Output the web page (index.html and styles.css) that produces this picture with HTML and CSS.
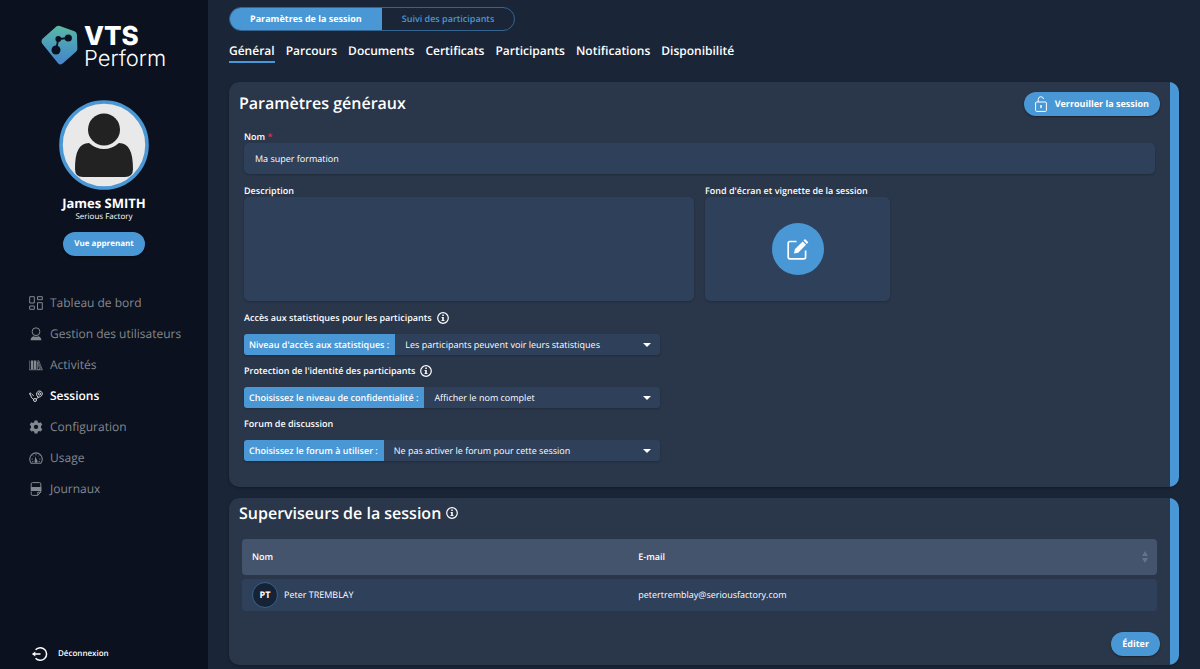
FILE: index.html
```
<!DOCTYPE html>
<html lang="fr">
<head>
<meta charset="utf-8">
<meta name="viewport" content="width=device-width, initial-scale=1">
<title>VTS Perform – Paramètres de la session</title>
<link rel="stylesheet" href="styles.css">
</head>
<body>
<svg class="sprite" aria-hidden="true">
  <symbol id="info" viewBox="0 0 12 12">
    <circle cx="6" cy="6" r="5.3" fill="none" stroke="#fff" stroke-width="1.2"/>
    <path d="M5.3 2.6h1.5v1.3H5.3zM4.6 5h2.2v3.2h.8v.9H4.4v-.9h.8V5.9h-.6z" fill="#fff"/>
  </symbol>
</svg>
<div class="app">
  <aside class="sidebar">
    <div class="brand">
      <svg class="brand-mark" viewBox="0 0 37 40" aria-hidden="true">
        <defs><linearGradient id="g" x1="0" y1="0" x2="0" y2="1"><stop offset="0" stop-color="#5bb8a4"/><stop offset=".5" stop-color="#4b9dba"/><stop offset="1" stop-color="#4685cc"/></linearGradient></defs>
        <path d="M15.600 1.300Q17.500 .3 19.500 1.200L33.500 6.300Q35.700 7.200 35.900 9.500L36.400 23.500Q36.300 25.300 35.200 26.500L22 38.300Q19.300 40.600 17 38.200L1.300 18.700Q-.2 16.500 1.300 14Z" fill="url(#g)"/>
        <path d="M15 25L17.300 14L27 13" fill="none" stroke="#0b111e" stroke-width="1.800"/>
        <circle cx="15" cy="25" r="4.500" fill="#0b111e"/><circle cx="17.300" cy="14" r="2.900" fill="#0b111e"/><circle cx="27.300" cy="13" r="3.600" fill="#0b111e"/>
      </svg>
      <div class="brand-name"><strong>VTS</strong><span>Perform</span></div>
    </div>
    <div class="profile">
      <svg class="avatar" viewBox="0 0 90 90" role="img" aria-label="Avatar">
        <circle cx="45" cy="45" r="43" fill="#e9e9e9" stroke="#4a97d5" stroke-width="3.600"/>
        <circle cx="45" cy="29.500" r="16" fill="#222"/>
        <path d="M30 43Q37 49 45 49Q53 49 60 43C70 43 74 52 74 69Q74 77 66 77H24Q16 77 16 69C16 52 20 43 30 43Z" fill="#222"/>
      </svg>
      <strong class="user-name">James SMITH</strong>
      <span class="company">Serious Factory</span>
      <button class="btn btn-small" type="button">Vue apprenant</button>
    </div>
    <nav class="menu" aria-label="Menu principal">
      <a href="#"><svg viewBox="0 0 14 14"><g fill="none" stroke="currentColor"><path d="M.7.7h4.600v6.300H.7zM8.500.7h4.800v3H8.500zM.7 10h4.600v3.300H.7zM8.500 6.700h4.800v6.600H8.500z"/></g></svg>Tableau de bord</a>
      <a href="#"><svg viewBox="0 0 14 14"><circle cx="7" cy="4.700" r="3.900" fill="none" stroke="currentColor"/><path d="M1.500 13.300Q2 9.600 4.600 9.200Q7 10.400 9.400 9.200Q12 9.600 12.500 13.300Z" fill="currentColor"/></svg>Gestion des utilisateurs</a>
      <a href="#"><svg viewBox="0 0 14 14"><path d="M.7 2.500v9.300M.2 11.800h13.600M8.700 2.800l3.500 8.500h1L9.800 2.600zM8.500 4v7.500h2.300z" fill="none" stroke="currentColor" stroke-width=".7"/><path d="M2 2.500h2.300v9H2zM4.900 2.500h2.500v9H4.900z" fill="currentColor"/></svg>Activités</a>
      <a class="active" href="#"><svg viewBox="0 0 14 14"><g fill="none" stroke="currentColor" stroke-width=".8"><circle cx="1.300" cy="4.800" r=".8"/><circle cx="6" cy="11" r="1.500"/><path d="M1.500 5.800Q2 9.300 4.600 10.300M3 5.300L4.700 6.800M7.200 10.100L9.300 8.300M9 8.400Q6.700 5.600 7.800 3.600Q9.500 1.100 12 2.300Q14.200 3.900 13 6.200Q11.800 8.100 9 8.400Z"/><circle cx="10.400" cy="4.900" r="1.200"/></g></svg>Sessions</a>
      <a href="#"><svg viewBox="0 0 14 14"><path fill-rule="evenodd" d="M5.600.5h2.800l.4 1.800 1.200.6 1.800-.6 1.500 2.400-1.300 1.400v1.700l1.300 1.400-1.500 2.400-1.800-.5-1.200.7-.4 1.700H5.600l-.4-1.700-1.200-.7-1.800.5L.7 9.200 2 7.800V6.100L.7 4.700l1.500-2.400 1.800.6 1.200-.6zM7 4.800a2.100 2.100 0 1 0 0 4.300 2.100 2.100 0 0 0 0-4.300z" fill="currentColor"/></svg>Configuration</a>
      <a href="#"><svg viewBox="0 0 14 14"><path d="M2.200 12.300A6.300 6.300 0 1 1 11.800 12.300Z" fill="none" stroke="currentColor" stroke-width="1.100"/><path d="M7 3v1.500M3.800 4.500l.9.900M10.200 4.500l-.9.900M2.500 8H4M10 8h1.500M3 10.500h1.400M9.600 10.500H11" stroke="currentColor" stroke-width=".8"/><path d="M6.200 5.500L8.400 9.700A1.500 1.500 0 1 1 5.700 9.700Z" fill="currentColor"/></svg>Usage</a>
      <a href="#"><svg viewBox="0 0 14 14"><path d="M2.200 5V1.900Q2.200.6 3.500.6h7Q11.800.6 11.800 1.900V10L8.800 13.400H3.500Q2.200 13.400 2.200 12.100V9.500M8.800 13.300V10.200h3" fill="none" stroke="currentColor"/><path d="M1.700 5h10.600v4H1.700z" fill="currentColor"/></svg>Journaux</a>
    </nav>
    <a class="logout" href="#"><svg viewBox="0 0 16 16"><g fill="none" stroke="#fff" stroke-width="1.500"><path d="M3.600 3.800A6.300 6.300 0 1 1 3.600 12.200"/><path d="M.8 8h7.700"/></g><path d="M0 8l3.300-2.400v4.800z" fill="#fff"/></svg>Déconnexion</a>
  </aside>

  <main class="content">
    <div class="switch">
      <button class="switch-item selected" type="button">Paramètres de la session</button>
      <button class="switch-item" type="button">Suivi des participants</button>
    </div>
    <nav class="tabs" aria-label="Sections">
      <a class="current" href="#">Général</a><a href="#">Parcours</a><a href="#">Documents</a><a href="#">Certificats</a><a href="#">Participants</a><a href="#">Notifications</a><a href="#">Disponibilité</a>
    </nav>

    <section class="card">
      <div class="card-body">
        <header class="card-head">
          <h1>Paramètres généraux</h1>
          <button class="btn btn-lock" type="button"><svg viewBox="0 0 12 16" aria-hidden="true"><g fill="none" stroke="#fff"><rect x=".6" y="6" width="10.800" height="9.400" rx="1"/><path d="M3.200 6V3.300Q3.400.8 5.800.7Q8.200.8 8.600 3"/></g><path d="M5 9.300h2l-.5 3h-1z" fill="#fff"/></svg>Verrouiller la session</button>
        </header>
        <form class="form">
          <div class="field">
            <label for="name">Nom <span class="required">*</span></label>
            <input id="name" class="box" type="text" value="Ma super formation">
          </div>
          <div class="row">
            <div class="field">
              <label for="desc">Description</label>
              <textarea id="desc" class="box"></textarea>
            </div>
            <div class="field">
              <span class="label">Fond d'écran et vignette de la session</span>
              <div class="box thumb">
                <button class="round" type="button" aria-label="Modifier l'image"><svg viewBox="0 0 24 24" aria-hidden="true"><path d="M10.500 4.500H4Q2.200 4.500 2.200 6.300V20Q2.200 21.800 4 21.800H17.800Q19.600 21.800 19.600 20V13.500" fill="none" stroke="#fff" stroke-width="1.700"/><path d="M8 16.500L8.800 12.200L16.700 4.400L20 7.700L12.200 15.700ZM17.500 3.600L19 2.100L22.300 5.300L20.800 6.900Z" fill="#fff"/></svg></button>
              </div>
            </div>
          </div>
          <div class="options">
            <div class="option">
              <div class="option-title">Accès aux statistiques pour les participants <svg class="info"><use href="#info"/></svg></div>
              <div class="combo"><label for="stats">Niveau d'accès aux statistiques :</label><div class="picker"><select id="stats"><option>Les participants peuvent voir leurs statistiques</option></select></div></div>
            </div>
            <div class="option">
              <div class="option-title">Protection de l'identité des participants <svg class="info"><use href="#info"/></svg></div>
              <div class="combo"><label for="privacy">Choisissez le niveau de confidentialité :</label><div class="picker"><select id="privacy"><option>Afficher le nom complet</option></select></div></div>
            </div>
            <div class="option">
              <div class="option-title">Forum de discussion</div>
              <div class="combo"><label for="forum">Choisissez le forum à utiliser :</label><div class="picker"><select id="forum"><option>Ne pas activer le forum pour cette session</option></select></div></div>
            </div>
          </div>
        </form>
      </div>
    </section>

    <section class="card">
      <div class="card-body compact">
        <header class="card-head">
          <h2>Superviseurs de la session <svg class="info"><use href="#info"/></svg></h2>
        </header>
        <div class="table-wrap">
          <table class="people">
            <thead><tr><th scope="col">Nom</th><th scope="col"><div class="sortable">E-mail<svg class="sort" viewBox="0 0 6 12" aria-hidden="true"><path d="M3 0l3 5H0zM3 12l3-5H0z" fill="#65728a"/></svg></div></th></tr></thead>
            <tbody><tr><td><div class="person"><span class="initials">PT</span>Peter TREMBLAY</div></td><td>petertremblay@seriousfactory.com</td></tr></tbody>
          </table>
        </div>
        <footer class="card-foot"><button class="btn" type="button">Éditer</button></footer>
      </div>
    </section>
  </main>
</div>
</body>
</html>
```
FILE: styles.css
```
* { box-sizing: border-box; }
body { margin: 0; background: #1a2638; color: #fff; font: 9px/14px "Open Sans", "Noto Sans", sans-serif; text-rendering: geometricPrecision; }
a { color: inherit; text-decoration: none; }
button, input, select, textarea { font: inherit; color: inherit; border: 0; margin: 0; text-rendering: inherit; }
button { cursor: pointer; }
h1, h2 { margin: 0; font-size: 16px; line-height: 22px; font-weight: 600; }
.sprite { position: absolute; width: 0; height: 0; }

.app { display: grid; grid-template-columns: 208px minmax(0, 1fr); min-height: 100vh; }
.sidebar { display: flex; flex-direction: column; background: #0b111e; padding: 25px 0 7px; }
.brand { display: flex; gap: 6px; padding-left: 41px; }
.brand-mark { width: 37px; height: 40px; }
.brand-name { display: flex; flex-direction: column; font-family: Inter, sans-serif; }
.brand-name strong { font-size: 26px; line-height: 24px; font-weight: 800; }
.brand-name span { font-size: 22px; line-height: 20px; font-weight: 300; }

.profile { display: flex; flex-direction: column; align-items: center; margin-top: 31px; }
.avatar { width: 90px; height: 90px; }
.user-name { font-size: 13px; line-height: 18px; margin-top: 4px; }
.company { font-size: 8px; line-height: 10px; }
.btn { display: inline-flex; align-items: center; justify-content: center; gap: 8px; height: 24px; padding: 0 11px; border-radius: 12px; background: #4a97d5; font-weight: 700; box-shadow: 0 1px 2px #0006; }
.btn-small { font-size: 8px; margin-top: 10px; }

.menu { display: flex; flex-direction: column; gap: 13px; margin-top: 38px; padding-left: 29px; }
.menu a { display: flex; align-items: center; gap: 7px; font-size: 12px; line-height: 18px; color: #84888f; }
.menu svg { width: 14px; height: 14px; }
.menu .active { color: #fff; font-weight: 600; }
.logout { display: flex; align-items: center; gap: 10px; margin-top: auto; padding-left: 32px; font-size: 8px; line-height: 16px; font-weight: 600; }
.logout svg { width: 16px; height: 16px; }

.content { display: flex; flex-direction: column; padding: 7px 21px 4px 21px; }
.switch { display: flex; align-self: flex-start; height: 24px; border: 1px solid #34648f; border-radius: 12px; overflow: hidden; }
.switch-item { padding: 0 20px; background: none; color: #4a97d5; font-weight: 600; }
.switch-item.selected { background: #4a97d5; color: #fff; font-weight: 700; }
.tabs { display: flex; gap: 11px; margin-top: 11px; font-size: 12px; line-height: 18px; font-weight: 600; }
.tabs a { padding-bottom: 1px; border-bottom: 2px solid transparent; }
.tabs .current { border-color: #4a97d5; }

.card { display: flex; margin-top: 19px; background: #2a3649; border-radius: 10px; overflow: hidden; box-shadow: 0 1px 3px #0005; }
.card::after { content: ""; flex: none; width: 9px; background: #4a97d5; }
.card + .card { margin-top: 11px; }
.card-body { flex: 1; min-width: 0; padding: 10px; }
.card-body.compact { padding: 4px 10px 9px; }
.card-head { display: flex; justify-content: space-between; align-items: flex-start; min-height: 24px; }
.btn-lock svg { width: 12px; height: 16px; }
.card h2 { display: flex; align-items: center; gap: 5px; }
.info { width: 12px; height: 12px; }

.form { padding: 14px 5px 16px; }
.field { display: flex; flex-direction: column; }
.field label, .label, .option-title { font-weight: 600; }
.field label, .label { line-height: 13px; }
.required { color: #d6344a; }
.box { background: #2f405b; border-radius: 5px; box-shadow: 0 1px 2px #0003; }
input.box { height: 31px; padding: 0 11px; }
.row { display: grid; grid-template-columns: 450px 185px; gap: 11px; margin-top: 10px; }
textarea.box, .thumb { height: 104px; resize: none; }
.thumb { display: flex; align-items: center; justify-content: center; }
.round { display: flex; align-items: center; justify-content: center; width: 52px; height: 52px; border-radius: 50%; background: #4a97d5; padding: 0; }
.round svg { width: 24px; height: 24px; }

.options { display: flex; flex-direction: column; gap: 9px; margin-top: 10px; }
.option-title { display: flex; align-items: center; gap: 5px; }
.combo { display: flex; width: 416px; height: 21px; margin-top: 9px; border-radius: 3px; overflow: hidden; background: #2f405b; box-shadow: 0 1px 2px #0003; }
.combo label { flex: none; padding: 0 6px 0 5px; line-height: 21px; font-weight: 600; background: #4a97d5; }
.picker { flex: 1; display: flex; position: relative; }
.picker::after { content: ""; position: absolute; right: 9px; top: 9px; border: 4px solid transparent; border-top-color: #fff; border-bottom: 0; pointer-events: none; }
select { flex: 1; appearance: none; background: none; padding: 0 20px 0 10px; }

.table-wrap { padding: 9px 3px 0; }
.people { width: 100%; border-collapse: separate; border-spacing: 0 4px; table-layout: fixed; }
.people th { height: 36px; padding: 0 9px 0 10px; text-align: left; font-weight: 600; background: #45546d; }
.people td { height: 32px; padding: 0 10px; background: #2f405b; }
.people th:first-child, .people td:first-child { width: 42%; border-radius: 4px 0 0 4px; }
.people th:last-child, .people td:last-child { padding-left: 12px; border-radius: 0 4px 4px 0; }
.sortable { display: flex; justify-content: space-between; align-items: center; }
.sort { width: 6px; height: 12px; }
.person { display: flex; align-items: center; gap: 6px; }
.initials { display: flex; align-items: center; justify-content: center; width: 26px; height: 26px; border: 1px solid #34648f; border-radius: 50%; background: #172235; font-weight: 700; }
.card-foot { display: flex; justify-content: flex-end; margin-top: 17px; }
```
